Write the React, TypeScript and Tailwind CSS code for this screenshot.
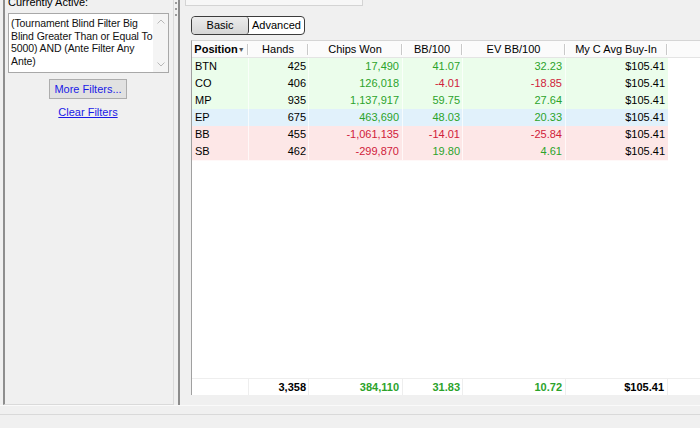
/** @file Stats table view with filter sidebar */

type Tone = "green" | "blue" | "red";

type Row = {
  pos: string;
  hands: string;
  chips: string;
  bb: string;
  ev: string;
  buyIn: string;
  tone: Tone;
};

const rows: Row[] = [
  { pos: "BTN", hands: "425", chips: "17,490", bb: "41.07", ev: "32.23", buyIn: "$105.41", tone: "green" },
  { pos: "CO", hands: "406", chips: "126,018", bb: "-4.01", ev: "-18.85", buyIn: "$105.41", tone: "green" },
  { pos: "MP", hands: "935", chips: "1,137,917", bb: "59.75", ev: "27.64", buyIn: "$105.41", tone: "green" },
  { pos: "EP", hands: "675", chips: "463,690", bb: "48.03", ev: "20.33", buyIn: "$105.41", tone: "blue" },
  { pos: "BB", hands: "455", chips: "-1,061,135", bb: "-14.01", ev: "-25.84", buyIn: "$105.41", tone: "red" },
  { pos: "SB", hands: "462", chips: "-299,870", bb: "19.80", ev: "4.61", buyIn: "$105.41", tone: "red" },
];

const toneBg: Record<Tone, string> = {
  green: "bg-[#ebfdeb]",
  blue: "bg-[#e1f1fb]",
  red: "bg-[#fde7e7]",
};

const grid = "grid grid-cols-[57px_60px_94px_60px_103px_102px_1fr]";

/** green for winners, red for losers */
const numColor = (v: string) => (v.startsWith("-") ? "text-[#d0213a]" : "text-[#2ba32b]");

/** Left sidebar with the active filter summary */
const FilterPanel = () => {
  return (
    <div className="w-[174px] h-full pl-[3px]">
      <div className="h-full border-l-2 border-[#8e8e8e] border-r border-r-[#dadada] border-b border-b-[#dadada] overflow-hidden">
        <p className="mt-[-5px] pl-[3px] leading-[14px] text-black">Currently Active:</p>
        <div className="ml-[3px] mt-[4px] w-[161px] h-[60px] border border-[#a8a8a8] bg-white flex">
          <p className="flex-1 pl-[2px] pt-[3px] text-[10.5px] leading-[12.5px] tracking-[-0.1px] text-[#111]">
            (Tournament Blind Filter Big Blind Greater Than or Equal To 5000) AND (Ante Filter Any Ante)
          </p>
          <div className="w-[15px] bg-[#f4f4f4] flex flex-col items-center justify-between py-[5px] text-[#b8b8b8]">
            <svg width="8" height="5" viewBox="0 0 8 5">
              <path d="M0.5 4.5 L4 1 L7.5 4.5" fill="none" stroke="currentColor" strokeWidth="1" />
            </svg>
            <svg width="8" height="5" viewBox="0 0 8 5">
              <path d="M0.5 0.5 L4 4 L7.5 0.5" fill="none" stroke="currentColor" strokeWidth="1" />
            </svg>
          </div>
        </div>
        <div className="flex flex-col items-center mt-[6px] pr-[2px]">
          <button className="w-[78px] h-[20px] bg-[#e1e1e1] border border-[#adadad] text-[#1a1ae6] leading-none">
            More Filters...
          </button>
          <a className="mt-[6px] text-[#1a1ae6] underline leading-[14px]">Clear Filters</a>
        </div>
      </div>
    </div>
  );
};

/** Column header with separator grip */
const HeadCell = ({ label, bold }: { label: string; bold?: boolean }) => {
  return (
    <div className="flex items-center h-full">
      <span className={`flex-1 text-center text-black ${bold ? "font-bold" : ""}`}>
        {label}
        {bold && <span className="text-[7px] align-middle text-[#555]">▼</span>}
      </span>
      <span className="w-[2px] h-[11px] border-l border-[#c9c9c9] border-r border-r-white" />
    </div>
  );
};

const StatsTable = () => {
  return (
    <div className="flex-1 flex flex-col bg-white border-l border-[#a0a0a0] border-t border-t-[#d5d5d5]">
      <div className={`${grid} h-[17px] bg-[#fbfbfb] border-b border-[#e4e4e4]`}>
        <HeadCell label="Position" bold />
        <HeadCell label="Hands" />
        <HeadCell label="Chips Won" />
        <HeadCell label="BB/100" />
        <HeadCell label="EV BB/100" />
        <HeadCell label="My C Avg Buy-In" />
        <div />
      </div>
      {rows.map((r) => (
        <div key={r.pos} className={`${grid} h-[17px] leading-[17px]`}>
          <div className={`${toneBg[r.tone]} pl-[3px] border-r border-b border-white/70`}>{r.pos}</div>
          <div className={`${toneBg[r.tone]} text-right pr-[2px] border-r border-b border-white/70`}>{r.hands}</div>
          <div className={`${toneBg[r.tone]} text-right pr-[3px] border-r border-b border-white/70 ${numColor(r.chips)}`}>{r.chips}</div>
          <div className={`${toneBg[r.tone]} text-right pr-[2px] border-r border-b border-white/70 ${numColor(r.bb)}`}>{r.bb}</div>
          <div className={`${toneBg[r.tone]} text-right pr-[3px] border-r border-b border-white/70 ${numColor(r.ev)}`}>{r.ev}</div>
          <div className={`${toneBg[r.tone]} text-right pr-[3px] border-b border-white/70 text-black`}>{r.buyIn}</div>
          <div />
        </div>
      ))}
      <div className="flex-1" />
      <div className={`${grid} h-[17px] leading-[16px] font-bold border-t border-[#eeeeee]`}>
        <div className="border-r border-[#eeeeee]" />
        <div className="text-right pr-[2px] border-r border-[#eeeeee] text-black">3,358</div>
        <div className="text-right pr-[3px] border-r border-[#eeeeee] text-[#2ba32b]">384,110</div>
        <div className="text-right pr-[2px] border-r border-[#eeeeee] text-[#2ba32b]">31.83</div>
        <div className="text-right pr-[3px] border-r border-[#eeeeee] text-[#2ba32b]">10.72</div>
        <div className="text-right pr-[3px] border-r border-[#eeeeee] text-black">$105.41</div>
        <div />
      </div>
    </div>
  );
};

/** Basic / Advanced toggle */
const ViewTabs = () => {
  return (
    <div className="flex w-[114px] h-[19px] border border-[#3c3c3c] rounded-[4px] overflow-hidden bg-white">
      <div className="w-[57px] flex items-center justify-center bg-gradient-to-b from-[#ececec] to-[#d6d6d6] border-r border-[#3c3c3c] rounded-[3px] text-black">
        Basic
      </div>
      <div className="flex-1 flex items-center justify-center text-black">Advanced</div>
    </div>
  );
};

const App = () => {
  return (
    <div className="w-[700px] h-[428px] bg-[#f0f0f0] overflow-hidden text-[11px] font-['Segoe_UI','Liberation_Sans',sans-serif] flex flex-col">
      <div className="flex h-[405px]">
        <FilterPanel />
        <div className="w-[4px] flex flex-col items-center gap-[4px] pt-[2px]">
          <span className="w-[2px] h-[2px] bg-[#9a9a9a]" />
          <span className="w-[2px] h-[2px] bg-[#9a9a9a]" />
          <span className="w-[2px] h-[2px] bg-[#9a9a9a]" />
        </div>
        <div className="flex-1 flex flex-col border-l-2 border-[#8c8c8c] pb-[10px]">
          <div className="ml-[5px] w-[178px] h-[6px] bg-[#f7f7f7] border border-t-0 border-[#d4d4d4]" />
          <div className="ml-[11px] mt-[10px]">
            <ViewTabs />
          </div>
          <div className="ml-[11px] mt-[5px] flex-1 flex">
            <StatsTable />
          </div>
        </div>
      </div>
      <div className="flex-1 border-t border-[#fafafa]">
        <div className="mt-[8px] border-t border-[#d9d9d9]" />
      </div>
    </div>
  );
};

export default App;
